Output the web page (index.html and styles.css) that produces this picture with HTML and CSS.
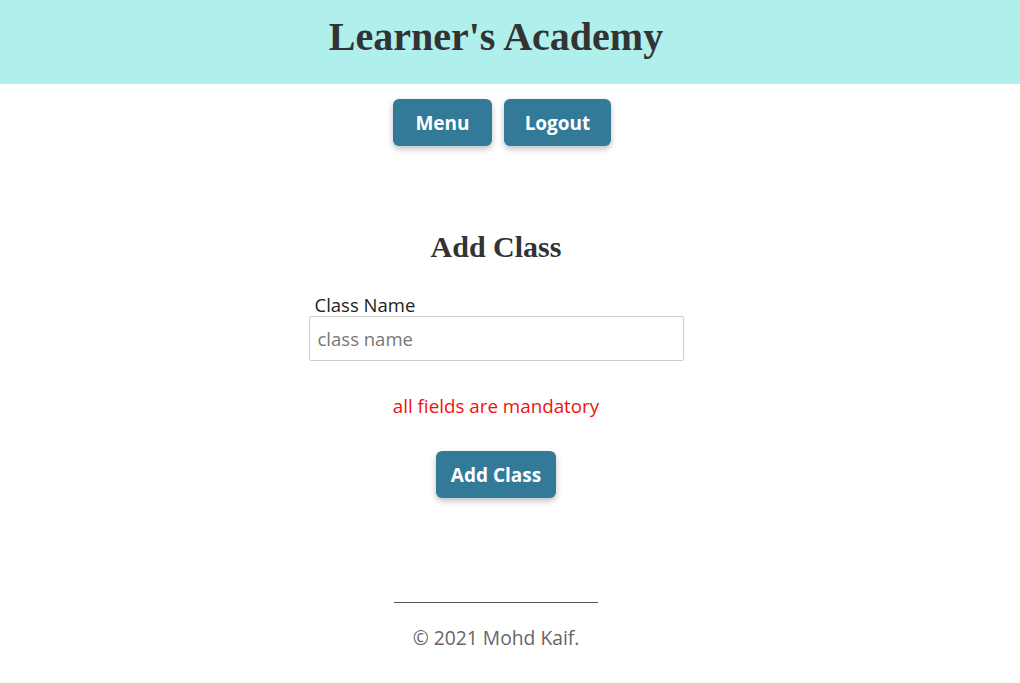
FILE: index.html
```html
<!DOCTYPE html>
<html>
<head>
<meta charset="utf-8">
<link rel="stylesheet" href="styles.css">
</head>
<body>
<header class="top">
  <div class="wrap">
    <h1 class="brand">Learner's Academy</h1>
  </div>
</header>
<div class="wrap">
  <nav class="nav">
    <button class="btn nav-btn">Menu</button>
    <button class="btn nav-btn">Logout</button>
  </nav>
  <main class="form-area">
    <h2 class="title">Add Class</h2>
    <div class="field">
      <label class="label">Class Name</label>
      <input class="input" type="text" placeholder="class name">
    </div>
    <p class="error">all fields are mandatory</p>
    <button class="btn submit">Add Class</button>
  </main>
  <footer class="footer">
    <hr class="rule">
    <p class="copy">© 2021 Mohd Kaif.</p>
  </footer>
</div>
</body>
</html>
```
FILE: styles.css
```css
* { box-sizing: border-box; }
html, body { margin: 0; padding: 0; background: #fff; }
body { font-family: "Open Sans", "Noto Sans", sans-serif; color: #333; }
.wrap { width: 992px; display: flex; flex-direction: column; align-items: center; }
.top { background: #b0f0ec; height: 84px; }
.brand {
  margin: 0;
  font-family: "Liberation Serif", serif;
  font-weight: bold;
  font-size: 40px;
  line-height: 74px;
  color: #333;
}
.nav { display: flex; margin-top: 15px; }
.btn {
  font-family: "Open Sans", "Noto Sans", sans-serif;
  font-weight: bold;
  font-size: 19px;
  color: #fff;
  background: #337a99;
  border: none;
  border-radius: 6px;
  height: 47px;
  box-shadow: 0 3px 6px rgba(0,0,0,0.25);
  cursor: pointer;
}
.nav-btn { margin-left: 12px; padding: 0 20px; }
.nav-btn:first-child { width: 99px; }
.nav-btn:last-child { width: 107px; }
.form-area { display: flex; flex-direction: column; align-items: center; margin-top: 84px; }
.title {
  margin: 0;
  font-family: "Liberation Serif", serif;
  font-weight: bold;
  font-size: 30px;
  line-height: 34px;
  color: #333;
}
.field { display: flex; flex-direction: column; width: 375px; margin-top: 30px; }
.label { font-size: 18.5px; line-height: 22px; padding-left: 6px; color: #222; }
.input {
  height: 45px;
  border: 1px solid #ccc;
  border-radius: 2px;
  font-family: "Open Sans", "Noto Sans", sans-serif;
  font-size: 18.5px;
  padding: 0 8px;
  color: #333;
}
.input::placeholder { color: #777; }
.error { margin: 33px 0 0; color: #f01010; font-size: 18.8px; line-height: 24px; }
.submit { margin-top: 33px; width: 120px; padding: 0; }
.footer { display: flex; flex-direction: column; align-items: center; margin-top: 104px; }
.rule { width: 204px; margin: 0; border: none; border-top: 1px solid #555; }
.copy { margin: 23px 0 0; color: #666; font-size: 19.3px; line-height: 24px; }
```
